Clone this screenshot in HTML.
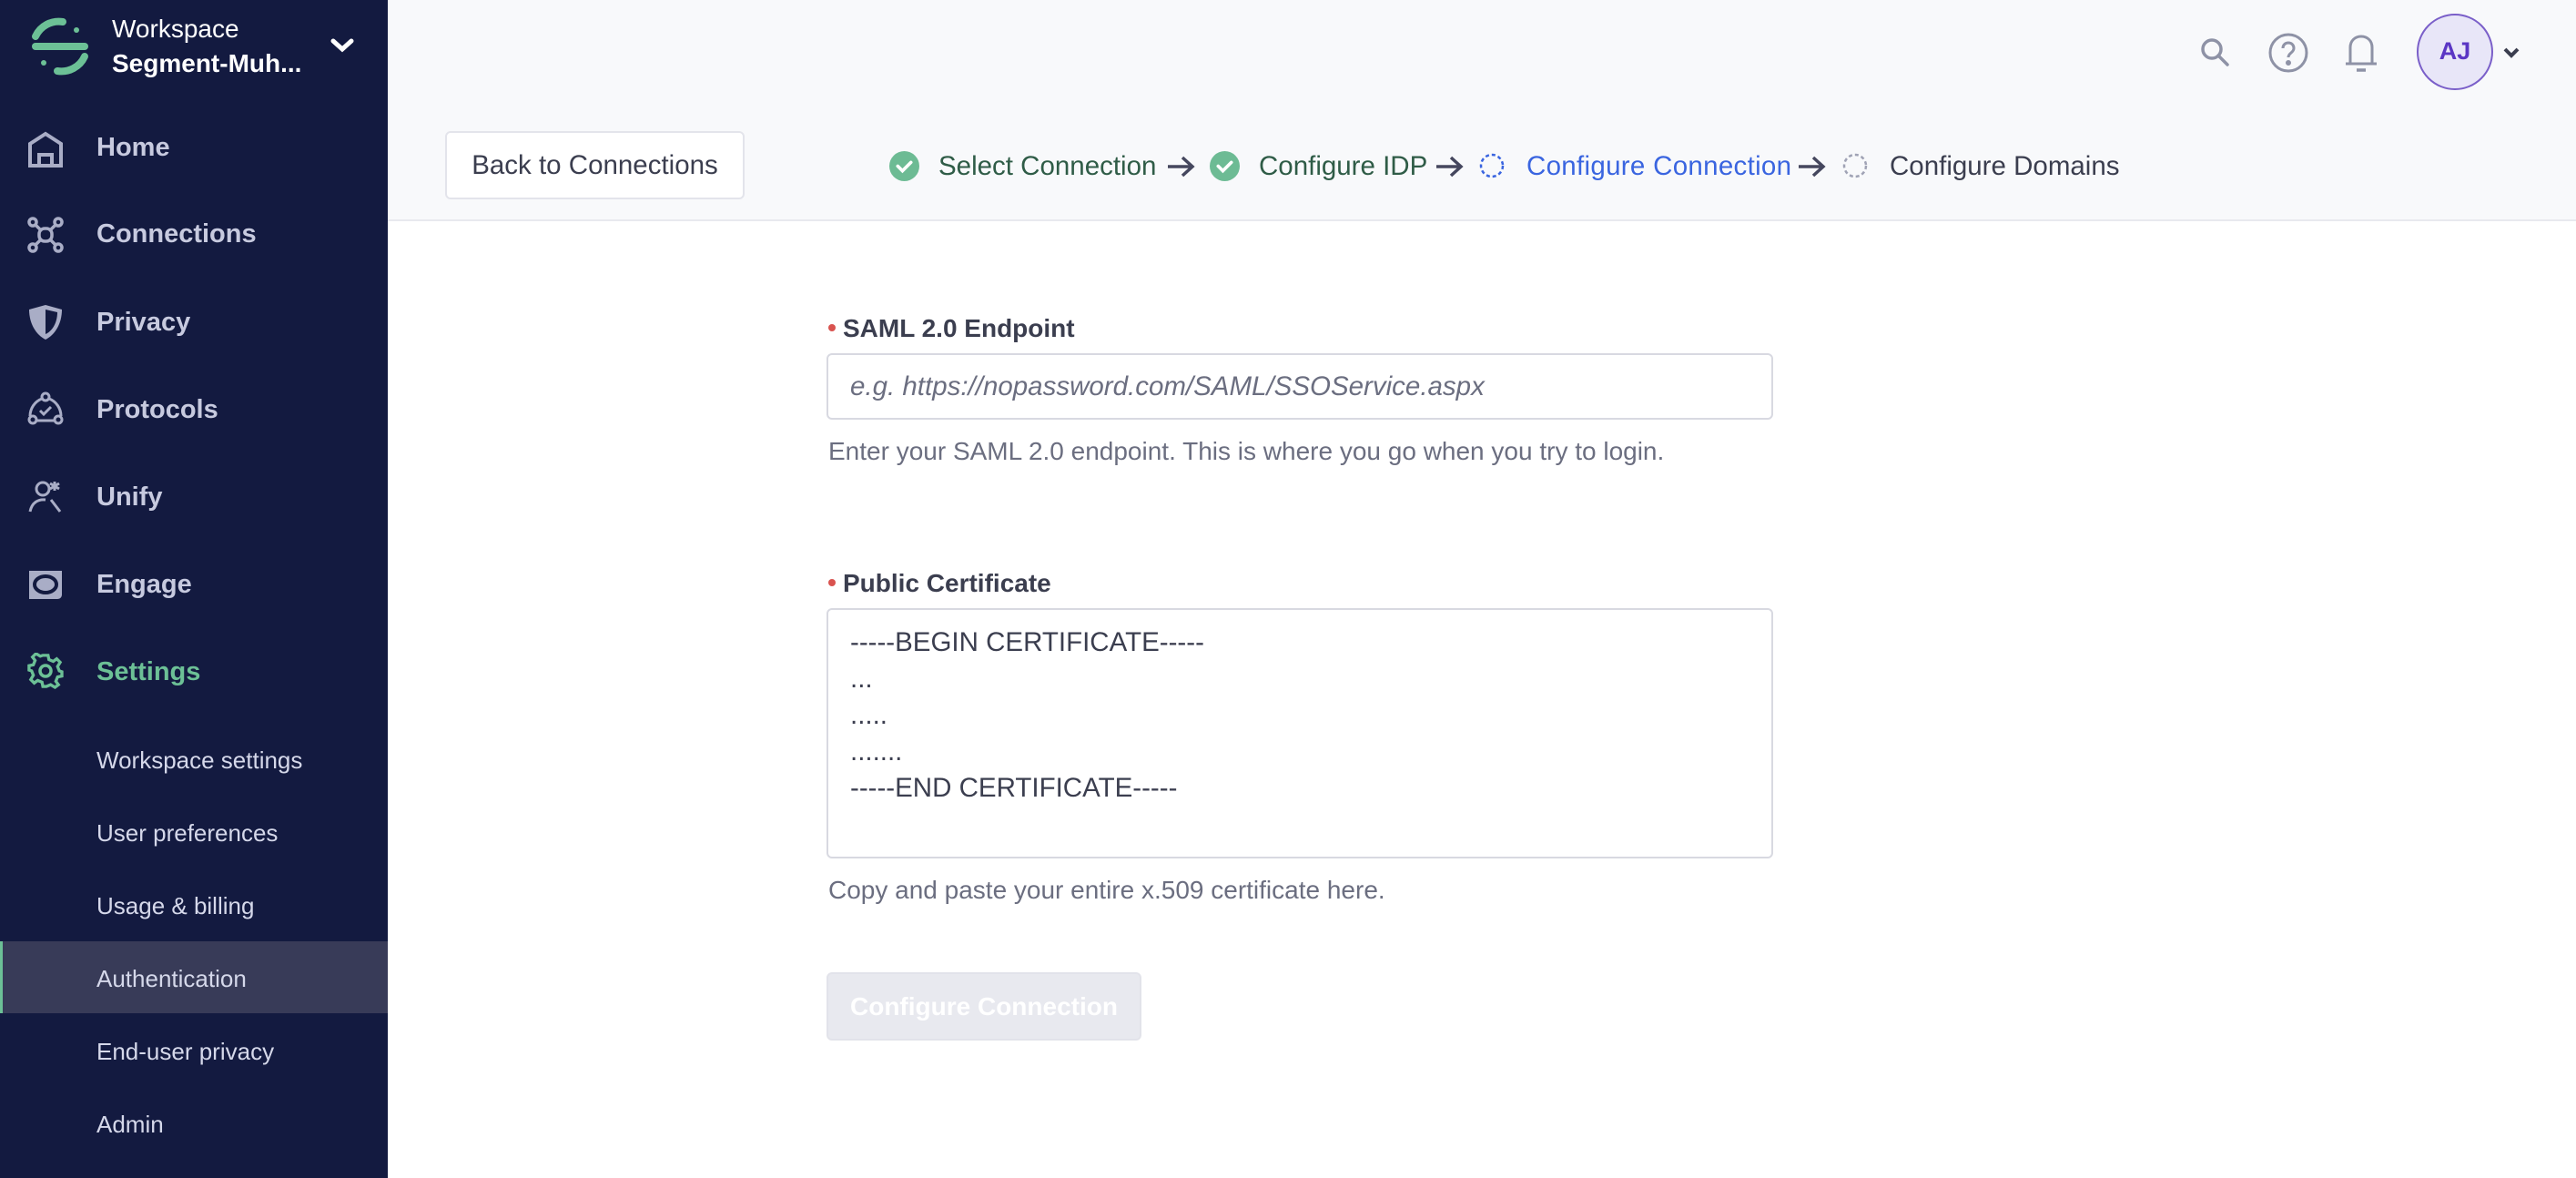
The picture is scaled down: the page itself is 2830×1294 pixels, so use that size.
<!DOCTYPE html>
<html><head><meta charset="utf-8">
<style>
*{margin:0;padding:0;box-sizing:border-box}
body{width:2830px;height:1294px;overflow:hidden;background:#fff;font-family:"Liberation Sans",sans-serif;position:relative}
.abs{position:absolute}
#side{left:0;top:0;width:426px;height:1294px;background:#131a40}
.nav{position:absolute;left:106px;font-size:29px;font-weight:bold;color:#c7cadf;line-height:1}
.sub{position:absolute;left:106px;font-size:26px;color:#d5d8ea;line-height:1}
.ic{position:absolute;left:30px;width:40px;height:40px}
#hdr{left:426px;top:0;width:2404px;height:243px;background:#f8f9fb;border-bottom:2px solid #e8e9ef}
.step{position:absolute;top:168px;font-size:29.5px;line-height:1;white-space:nowrap}
.arr{position:absolute;top:170px}
.lbl{position:absolute;left:926px;font-size:28px;font-weight:bold;color:#3b3e4f;line-height:1}
.dot{position:absolute;left:910px;width:8px;height:8px;border-radius:50%;background:#d9534f}
.help{position:absolute;left:910px;font-size:28px;color:#6b6e80;line-height:1}
</style></head><body>
<div id="side" class="abs">
  <svg class="abs" style="left:33px;top:18px" width="66" height="66" viewBox="0 0 66 66" fill="none" stroke="#6cc096" stroke-width="8" stroke-linecap="round">
    <path d="M6 22 A28 28 0 0 1 36 6"/><circle cx="51" cy="15" r="3" fill="#6cc096" stroke="none"/>
    <path d="M6 33 H60"/>
    <path d="M60 44 A28 28 0 0 1 30 60"/><circle cx="15" cy="51" r="3" fill="#6cc096" stroke="none"/>
  </svg>
  <div class="abs" style="left:123px;top:16px;font-size:28px;color:#fff">Workspace</div>
  <div class="abs" style="left:123px;top:54px;font-size:28px;font-weight:bold;color:#fff">Segment-Muh...</div>
  <svg class="abs" style="left:362px;top:40px" width="28" height="20" viewBox="0 0 28 20"><path d="M4 5 L14 14 L24 5" fill="none" stroke="#fff" stroke-width="5" stroke-linecap="round"/></svg>

  <svg class="ic" style="top:144px" viewBox="0 0 40 40" fill="none" stroke="#a9adc6" stroke-width="4"><path d="M3 38 V14 L20 3 L37 14 V38 Z"/><path d="M13 38 V26 H27 V38"/></svg>
  <div class="nav" style="top:148px">Home</div>
  <svg class="ic" style="top:238px" viewBox="0 0 40 40" fill="none" stroke="#a9adc6" stroke-width="3.5"><circle cx="6" cy="6" r="4"/><circle cx="34" cy="6" r="4"/><circle cx="6" cy="34" r="4"/><circle cx="34" cy="34" r="4"/><rect x="13" y="13" width="14" height="14" rx="6"/><path d="M9 9 L14 14 M31 9 L26 14 M9 31 L14 26 M31 31 L26 26"/></svg>
  <div class="nav" style="top:243px">Connections</div>
  <svg class="ic" style="top:334px" viewBox="0 0 40 40"><path d="M2 6 L20 1 L38 6 C38 22 30 34 20 39 C10 34 2 22 2 6 Z" fill="#a9adc6"/><path d="M20 6 L33 9 C33 21 27 30 20 33 Z" fill="#131a40"/></svg>
  <div class="nav" style="top:340px">Privacy</div>
  <svg class="ic" style="top:429px" viewBox="0 0 40 40" fill="none" stroke="#a9adc6" stroke-width="3"><circle cx="20" cy="7" r="4"/><circle cx="6" cy="32" r="4"/><circle cx="34" cy="32" r="4"/><path d="M16 9 C8 12 3 20 3 28 M24 9 C32 12 37 20 37 28 M10 33 H30"/><path d="M14 22 L18 26 L26 18"/></svg>
  <div class="nav" style="top:436px">Protocols</div>
  <svg class="ic" style="top:525px" viewBox="0 0 40 40" fill="none" stroke="#a9adc6" stroke-width="3"><circle cx="17" cy="12" r="7"/><path d="M3 37 C5 27 12 23 20 24 M26 24 L36 37 M30 4 L30 14 M25 6 L35 12 M35 6 L25 12"/></svg>
  <div class="nav" style="top:532px">Unify</div>
  <svg class="ic" style="top:621px" viewBox="0 0 40 40"><path d="M2 6 H38 V32 C38 35 36 37 33 37 H2 Z" fill="#a9adc6"/><ellipse cx="20" cy="21" rx="12" ry="9" fill="none" stroke="#131a40" stroke-width="4"/></svg>
  <div class="nav" style="top:628px">Engage</div>
  <svg class="ic" style="top:717px" viewBox="0 0 40 40" fill="none" stroke="#6cc096" stroke-width="3.5"><path d="M17 3 H23 L24 8 L29 10 L33 7 L37 11 L34 16 L36 21 L39 22 V27 L34 28 L32 33 L35 37 L31 40 L26 37 L21 39 H17 L16 34 L11 32 L7 35 L3 31 L6 26 L4 21 L1 20 V15 L6 14 L8 9 L5 5 L9 1 L14 4 Z" transform="scale(0.95) translate(1,0)"/><circle cx="20" cy="20" r="6"/></svg>
  <div class="nav" style="top:724px;color:#6cc096">Settings</div>

  <div class="sub" style="top:822px">Workspace settings</div>
  <div class="sub" style="top:902px">User preferences</div>
  <div class="sub" style="top:982px">Usage &amp; billing</div>
  <div class="abs" style="left:0;top:1034px;width:426px;height:79px;background:#383b58;border-left:3px solid #6cc096"></div>
  <div class="sub" style="top:1062px">Authentication</div>
  <div class="sub" style="top:1142px">End-user privacy</div>
  <div class="sub" style="top:1222px">Admin</div>
</div>

<div id="hdr" class="abs">
  <svg class="abs" style="left:1990px;top:40px" width="36" height="36" viewBox="0 0 36 36" fill="none" stroke="#8e92a6" stroke-width="3.5"><circle cx="14" cy="14" r="10"/><path d="M21 21 L31 31" stroke-linecap="round"/></svg>
  <svg class="abs" style="left:2066px;top:36px" width="44" height="44" viewBox="0 0 44 44" fill="none" stroke="#8e92a6" stroke-width="3"><circle cx="22" cy="22" r="20"/><path d="M16 17 C16 9 28 9 28 17 C28 22 22 22 22 27"/><circle cx="22" cy="33" r="1.5" fill="#8e92a6"/></svg>
  <svg class="abs" style="left:2148px;top:36px" width="40" height="44" viewBox="0 0 40 44" fill="none" stroke="#8e92a6" stroke-width="3"><path d="M8 34 V16 C8 9 13 4 20 4 C27 4 32 9 32 16 V34 M3 34 H37"/><path d="M15 41 H25" stroke-width="3.5"/></svg>
  <div class="abs" style="left:2229px;top:15px;width:84px;height:84px;border-radius:50%;background:#e8e6f8;border:2.5px solid #7a5fc9;color:#5a36c4;font-size:27px;font-weight:bold;text-align:center;line-height:79px">AJ</div>
  <svg class="abs" style="left:2322px;top:50px" width="22" height="16" viewBox="0 0 22 16"><path d="M4 4 L11 11 L18 4" fill="none" stroke="#3b3e4f" stroke-width="4"/></svg>

  <div class="abs" style="left:63px;top:144px;width:329px;height:75px;background:#fff;border:2px solid #e3e4eb;border-radius:6px;font-size:29.5px;color:#3b3e4f;text-align:center;line-height:71px">Back to Connections</div>

  <svg class="abs" style="left:551px;top:166px" width="33" height="33" viewBox="0 0 32 32"><circle cx="16" cy="16" r="16" fill="#6dbb94"/><path d="M9 16 L14 21 L23 12" fill="none" stroke="#fff" stroke-width="3.5" stroke-linecap="round"/></svg>
  <div class="step" style="left:605px;color:#2f5c47">Select Connection</div>
  <svg class="arr" style="left:855px" width="32" height="26" viewBox="0 0 32 26"><path d="M2 13 H29 M18 3 L29 13 L18 23" fill="none" stroke="#45475e" stroke-width="3.5"/></svg>
  <svg class="abs" style="left:903px;top:166px" width="33" height="33" viewBox="0 0 32 32"><circle cx="16" cy="16" r="16" fill="#6dbb94"/><path d="M9 16 L14 21 L23 12" fill="none" stroke="#fff" stroke-width="3.5" stroke-linecap="round"/></svg>
  <div class="step" style="left:957px;color:#2f5c47">Configure IDP</div>
  <svg class="arr" style="left:1150px" width="32" height="26" viewBox="0 0 32 26"><path d="M2 13 H29 M18 3 L29 13 L18 23" fill="none" stroke="#45475e" stroke-width="3.5"/></svg>
  <svg class="abs" style="left:1199px;top:168px" width="28" height="28" viewBox="0 0 28 28"><circle cx="14" cy="14" r="12" fill="none" stroke="#3a65e0" stroke-width="2.5" stroke-dasharray="4 3"/></svg>
  <div class="step" style="left:1251px;color:#3a65e0;letter-spacing:0.3px">Configure Connection</div>
  <svg class="arr" style="left:1548px" width="32" height="26" viewBox="0 0 32 26"><path d="M2 13 H29 M18 3 L29 13 L18 23" fill="none" stroke="#45475e" stroke-width="3.5"/></svg>
  <svg class="abs" style="left:1598px;top:168px" width="28" height="28" viewBox="0 0 28 28"><circle cx="14" cy="14" r="12" fill="none" stroke="#a0a3b5" stroke-width="2.5" stroke-dasharray="4 3"/></svg>
  <div class="step" style="left:1650px;color:#3b3e4f">Configure Domains</div>
</div>

<div class="dot" style="top:356px"></div>
<div class="lbl" style="top:347px">SAML 2.0 Endpoint</div>
<div class="abs" style="left:908px;top:388px;width:1040px;height:73px;border:2px solid #d8d9e1;border-radius:6px;font-size:29.5px;font-style:italic;color:#6b6e80;line-height:69px;padding-left:24px">e.g. https://nopassword.com/SAML/SSOService.aspx</div>
<div class="help" style="top:482px">Enter your SAML 2.0 endpoint. This is where you go when you try to login.</div>

<div class="dot" style="top:636px"></div>
<div class="lbl" style="top:627px">Public Certificate</div>
<div class="abs" style="left:908px;top:668px;width:1040px;height:275px;border:2px solid #d8d9e1;border-radius:6px;font-size:29.5px;color:#3b3e4f;padding:16px 0 0 24px;line-height:40px">-----BEGIN CERTIFICATE-----<br>...<br>.....<br>.......<br>-----END CERTIFICATE-----</div>
<div class="help" style="top:964px">Copy and paste your entire x.509 certificate here.</div>

<div class="abs" style="left:908px;top:1068px;width:346px;height:75px;background:#e8e9ef;border:2px solid #e2e3ea;border-radius:6px;font-size:28px;font-weight:bold;color:#fff;text-align:center;line-height:71px">Configure Connection</div>
</body></html>
